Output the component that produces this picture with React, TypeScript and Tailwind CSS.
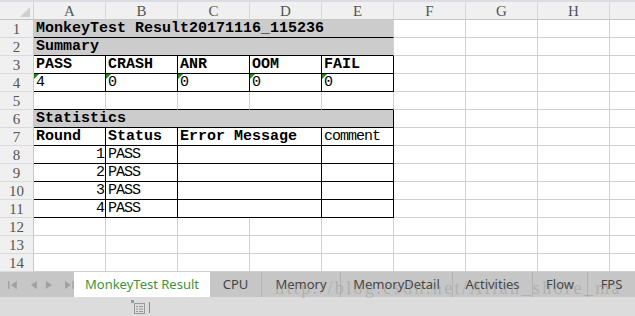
import React from 'react'

const COLS = ['A', 'B', 'C', 'D', 'E', 'F', 'G', 'H', '']
const GRID = 'border-[#d0d0d0]'

interface CellProps {
  span?: number
  text?: string
  bold?: boolean
  fill?: boolean
  right?: boolean
  blackR?: boolean
  blackB?: boolean
  tri?: boolean
}

const Cell: React.FC<CellProps> = ({ span = 1, text, bold, fill, right, blackR, blackB, tri }) => {
  const spanCls = span === 5 ? 'col-span-5' : span === 2 ? 'col-span-2' : 'col-span-1'
  return (
    <div
      className={`${spanCls} relative h-[18px] border-r border-b ${blackR ? 'border-r-black' : 'border-r-[#d0d0d0]'} ${
        blackB ? 'border-b-black' : 'border-b-[#d0d0d0]'
      } ${fill ? 'bg-[#cccccc]' : 'bg-white'} flex items-end ${right ? 'justify-end pr-[1px]' : 'pl-[2px]'} overflow-hidden`}
    >
      {tri && (
        <svg className="absolute left-0 top-0" width="5" height="5">
          <polygon points="0,0 5,0 0,5" fill="#1f8a1f" />
        </svg>
      )}
      {text && (
        <span
          className={`font-['Liberation_Mono',monospace] text-[15px] leading-[16px] whitespace-pre text-black ${
            bold ? 'font-bold tracking-[0px]' : 'tracking-[-1px]'
          }`}
        >
          {text}
        </span>
      )}
    </div>
  )
}

// trailing empty columns F..I
const Rest: React.FC<{ n?: number }> = ({ n = 4 }) => (
  <>
    {Array.from({ length: n }).map((_, i) => (
      <div key={i} className={`h-[18px] border-r border-b ${GRID} bg-white`} />
    ))}
  </>
)

const RowHead: React.FC<{ n: number }> = ({ n }) => (
  <div className="h-[18px] bg-[#f0f0f0] border-r border-b border-r-[#c8c8c8] border-b-[#dadada] flex items-end justify-center">
    <span className="font-['Liberation_Serif',serif] text-[15px] leading-[16px] text-[#555555]">{n}</span>
  </div>
)

const App: React.FC = () => {
  const stats = [1, 2, 3, 4]
  return (
    <div className="w-[635px] h-[316px] bg-white overflow-hidden relative flex flex-col">
      <div className="h-[2px] bg-[#dcdce4]" />
      <div className="grid grid-cols-[34px_repeat(8,72px)_26px]">
        {/* column headers */}
        <div className="h-[18px] bg-[#f0f0f0] border-r border-b border-r-[#d4d4d4] border-b-[#c4c4c4] relative">
          <svg className="absolute right-[3px] bottom-[2px]" width="10" height="10">
            <polygon points="10,0 10,10 0,10" fill="#cfcfcf" />
          </svg>
        </div>
        {COLS.map((c, i) => (
          <div
            key={i}
            className="h-[18px] bg-[#f0f0f0] border-r border-b border-r-[#d8d8d8] border-b-[#c4c4c4] flex items-end justify-center"
          >
            <span className="font-['Liberation_Serif',serif] text-[15px] leading-[16px] text-[#555555]">{c}</span>
          </div>
        ))}

        {/* row 1 */}
        <RowHead n={1} />
        <Cell span={5} fill bold blackB text="MonkeyTest Result20171116_115236" />
        <Rest />

        {/* row 2 */}
        <RowHead n={2} />
        <Cell span={5} fill bold blackB text="Summary" />
        <Rest />

        {/* row 3 */}
        <RowHead n={3} />
        {['PASS', 'CRASH', 'ANR', 'OOM', 'FAIL'].map((t) => (
          <Cell key={t} bold blackR blackB text={t} />
        ))}
        <Rest />

        {/* row 4 */}
        <RowHead n={4} />
        {['4', '0', '0', '0', '0'].map((t, i) => (
          <Cell key={i} tri blackR blackB text={t} />
        ))}
        <Rest />

        {/* row 5 */}
        <RowHead n={5} />
        {[0, 1, 2, 3, 4].map((i) => (
          <Cell key={i} blackB />
        ))}
        <Rest />

        {/* row 6 */}
        <RowHead n={6} />
        <Cell span={5} fill bold blackR blackB text="Statistics" />
        <Rest />

        {/* row 7 */}
        <RowHead n={7} />
        <Cell bold blackR blackB text="Round" />
        <Cell bold blackR blackB text="Status" />
        <Cell span={2} bold blackR blackB text="Error Message" />
        <Cell blackR blackB text="comment" />
        <Rest />

        {/* rows 8-11 */}
        {stats.map((n) => (
          <React.Fragment key={n}>
            <RowHead n={n + 7} />
            <Cell right blackR blackB text={String(n)} />
            <Cell blackR blackB text="PASS" />
            <Cell span={2} blackR blackB />
            <Cell blackR blackB />
            <Rest />
          </React.Fragment>
        ))}

        {/* rows 12-14 */}
        {[12, 13, 14].map((n) => (
          <React.Fragment key={n}>
            <RowHead n={n} />
            <Rest n={9} />
          </React.Fragment>
        ))}
      </div>

      {/* sheet tabs */}
      <div className="h-[25px] flex bg-[#c6c6c6] font-['Noto_Sans',sans-serif] text-[13px] text-[#444444]">
        <div className="w-[74px] flex items-center gap-[5px] pl-[8px] text-[#a0a0a0]">
          <svg width="10" height="10" viewBox="0 0 10 10">
            <rect x="0" y="1" width="1.5" height="8" fill="currentColor" />
            <polygon points="9,1 3,5 9,9" fill="currentColor" />
          </svg>
          <svg width="10" height="10" viewBox="0 0 10 10" className="ml-[6px]">
            <polygon points="8,1 2,5 8,9" fill="currentColor" />
          </svg>
          <svg width="10" height="10" viewBox="0 0 10 10">
            <polygon points="2,1 8,5 2,9" fill="currentColor" />
          </svg>
          <svg width="10" height="10" viewBox="0 0 10 10" className="ml-[6px]">
            <polygon points="1,1 7,5 1,9" fill="currentColor" />
            <rect x="8.5" y="1" width="1.5" height="8" fill="currentColor" />
          </svg>
        </div>
        <div className="w-[136px] bg-white flex items-center justify-center text-[#3d943d]">MonkeyTest Result</div>
        <div className="w-[52px] flex items-center justify-center border-r border-[#b2b2b2]">CPU</div>
        <div className="w-[79px] flex items-center justify-center border-r border-[#b2b2b2]">Memory</div>
        <div className="w-[112px] flex items-center justify-center border-r border-[#b2b2b2]">MemoryDetail</div>
        <div className="w-[80px] flex items-center justify-center border-r border-[#b2b2b2]">Activities</div>
        <div className="w-[55px] flex items-center justify-center border-r border-[#b2b2b2]">Flow</div>
        <div className="flex-1 flex items-center justify-center">FPS</div>
      </div>

      {/* status bar */}
      <div className="flex-1 bg-[#dcdcdc] flex items-center pl-[131px] gap-[3px]">
        <svg width="15" height="14" viewBox="0 0 15 14">
          <rect x="0" y="0" width="3" height="3" fill="#9a9a9a" />
          <rect x="3.5" y="3.5" width="10" height="10" fill="none" stroke="#9a9a9a" />
          <rect x="5" y="6" width="2" height="1" fill="#9a9a9a" />
          <rect x="8" y="6" width="4" height="1" fill="#9a9a9a" />
          <rect x="5" y="8.5" width="2" height="1" fill="#9a9a9a" />
          <rect x="8" y="8.5" width="4" height="1" fill="#9a9a9a" />
          <rect x="5" y="11" width="2" height="1" fill="#9a9a9a" />
          <rect x="8" y="11" width="4" height="1" fill="#9a9a9a" />
        </svg>
        <div className="w-[1px] h-[11px] bg-[#8a8a8a] mt-[2px]" />
      </div>

      {/* watermark */}
      <div className="absolute left-[275px] top-[278px] font-['Liberation_Serif',serif] text-[18px] leading-[20px] tracking-[2.4px] text-[rgba(140,140,140,0.4)] whitespace-pre pointer-events-none">
        http://blog.csdn.net/Allan_shore_ma
      </div>
    </div>
  )
}

export default App
